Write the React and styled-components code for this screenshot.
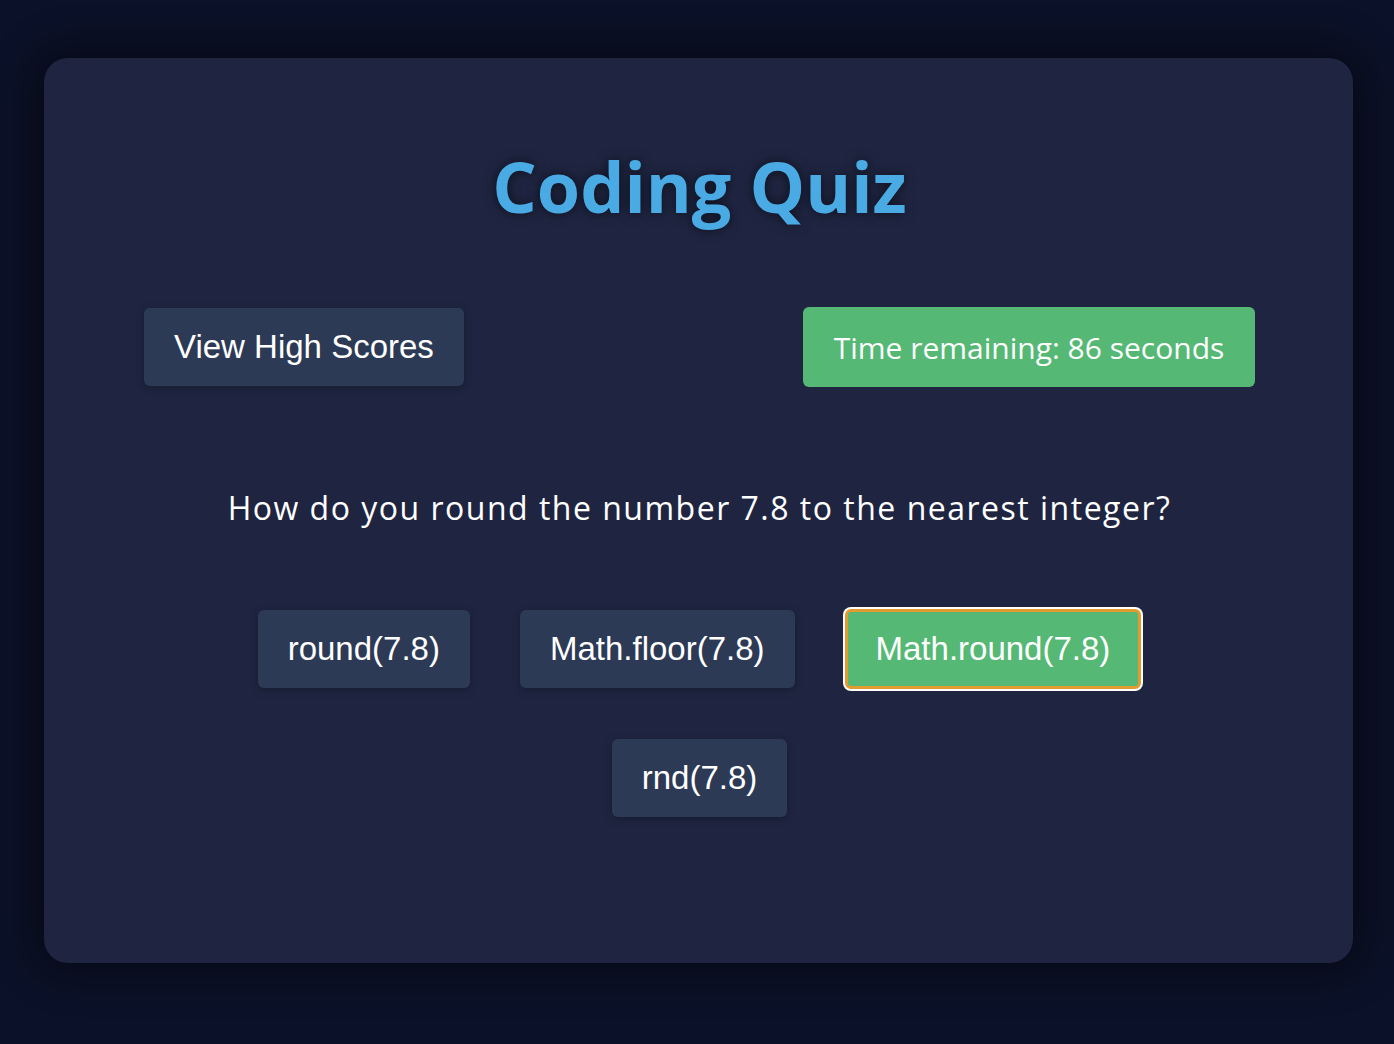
import React, { useState } from "react";
import styled, { createGlobalStyle } from "styled-components";

const GlobalStyle = createGlobalStyle`
  html, body {
    margin: 0;
    padding: 0;
    background: #0b1128;
    min-height: 100%;
  }
  body {
    font-family: "Open Sans", "Noto Sans", sans-serif;
  }
`;

const answers = ["round(7.8)", "Math.floor(7.8)", "Math.round(7.8)", "rnd(7.8)"];

export default function App() {
  const [selected, setSelected] = useState(2);

  return (
    <Page>
      <GlobalStyle />
      <Card>
        <Title>Coding Quiz</Title>
        <TopBar>
          <ScoresButton>View High Scores</ScoresButton>
          <Timer>Time remaining: 86 seconds</Timer>
        </TopBar>
        <Question>How do you round the number 7.8 to the nearest integer?</Question>
        <Answers>
          {answers.map((a, i) => (
            <Answer key={a} $active={i === selected} onClick={() => setSelected(i)}>
              {a}
            </Answer>
          ))}
        </Answers>
      </Card>
    </Page>
  );
}

const Page = styled.div`
  min-height: 1044px;
  padding-top: 58px;
  box-sizing: border-box;
`;

const Card = styled.div`
  width: 1309px;
  margin: 0 0 0 44px;
  box-sizing: border-box;
  padding: 88px 98px 121px 100px;
  background: #1f2541;
  border-radius: 24px;
  box-shadow: 0 0 40px 10px rgba(0, 0, 0, 0.45);
  display: flex;
  flex-direction: column;
  align-items: stretch;
`;

const Title = styled.h1`
  margin: 0;
  text-align: center;
  font-family: "Open Sans", sans-serif;
  font-weight: 700;
  font-size: 70px;
  line-height: 80px;
  color: #4aaae3;
  text-shadow: 0 0 12px rgba(0, 0, 0, 0.6);
`;

const TopBar = styled.div`
  margin-top: 81px;
  display: flex;
  justify-content: space-between;
  align-items: center;
  height: 80px;
`;

const ScoresButton = styled.button`
  box-sizing: border-box;
  height: 78px;
  padding: 0 30px;
  border: none;
  border-radius: 6px;
  background: #2d3a55;
  color: #fff;
  font-family: "Liberation Sans", Arial, sans-serif;
  font-size: 33px;
  cursor: pointer;
  box-shadow: 0 2px 8px rgba(0, 0, 0, 0.25);
`;

const Timer = styled.div`
  height: 80px;
  width: 452px;
  display: flex;
  align-items: center;
  justify-content: center;
  border-radius: 6px;
  background: #55b874;
  color: #fff;
  font-family: "Open Sans", sans-serif;
  font-size: 30px;
`;

const Question = styled.p`
  margin: 101px 0 0;
  text-align: center;
  color: #fff;
  font-family: "Open Sans", sans-serif;
  font-size: 32px;
  line-height: 40px;
  letter-spacing: 1.5px;
`;

const Answers = styled.div`
  margin-top: 56px;
  display: flex;
  flex-wrap: wrap;
  justify-content: center;
  align-items: center;
  padding: 0 10px;
`;

const Answer = styled.button`
  box-sizing: border-box;
  margin: 25px;
  height: ${(p) => (p.$active ? "80px" : "78px")};
  padding: 0 ${(p) => (p.$active ? "28px" : "30px")};
  border: ${(p) => (p.$active ? "3px solid #e19b2f" : "none")};
  box-shadow: ${(p) =>
    p.$active ? "0 0 0 2px #ffffff" : "0 2px 8px rgba(0, 0, 0, 0.25)"};
  border-radius: 6px;
  background: ${(p) => (p.$active ? "#55b874" : "#2d3a55")};
  color: #fff;
  font-family: "Liberation Sans", Arial, sans-serif;
  font-size: 33px;
  cursor: pointer;
`;
